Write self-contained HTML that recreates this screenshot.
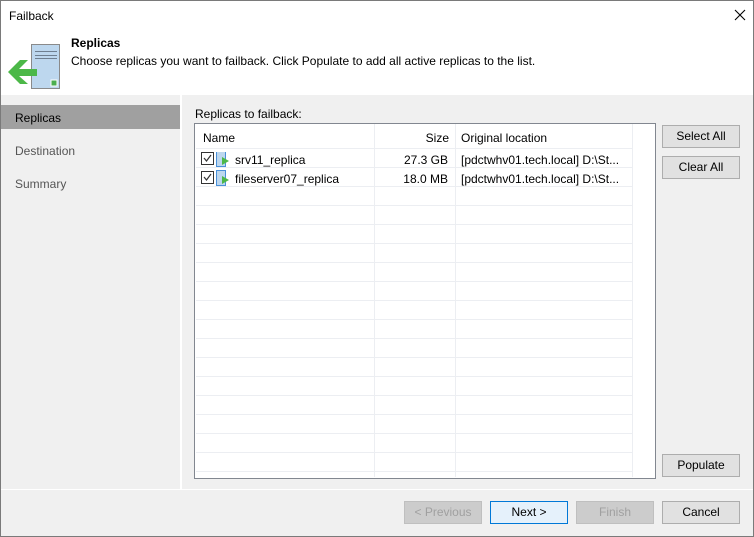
<!DOCTYPE html>
<html><head><style>
*{margin:0;padding:0;box-sizing:border-box}
body{width:754px;height:537px;position:relative;font-family:"Liberation Sans",sans-serif;font-size:12px;color:#000;background:#fff;overflow:hidden}
.win{position:absolute;left:0;top:0;width:754px;height:537px;border:1px solid #7a7a7a;background:#fff}
.a{position:absolute}
.btn{position:absolute;width:78px;height:23px;border:1px solid #adadad;background:#e1e1e1;text-align:center;line-height:21px;font-size:12px}
.dis{color:#a0a0a0;background:#cccccc;border-color:#bfbfbf}
.hl{position:absolute;left:1px;width:436px;height:1px;background:#eceef2}
.vl{position:absolute;top:0;width:1px;height:353px;background:#eceef2}
</style></head><body><div class="win">
<div class="a" style="left:8px;top:8px">Failback</div>
<svg class="a" style="left:733px;top:8px" width="12" height="12"><path d="M1 1 L11 11 M11 1 L1 11" stroke="#000" stroke-width="1.1"/></svg>
<svg class="a" style="left:5px;top:41px" width="56" height="50">
<rect x="25.5" y="2.5" width="28" height="44" fill="#bdd7ee" stroke="#8a8a8a"/>
<line x1="29" y1="9.5" x2="51" y2="9.5" stroke="#6f7f90"/><line x1="29" y1="13.5" x2="51" y2="13.5" stroke="#6f7f90"/><line x1="29" y1="16.5" x2="51" y2="16.5" stroke="#6f7f90"/>
<rect x="45" y="38" width="6" height="6" fill="#4caf50" stroke="#fff"/>
<polygon points="2,30 14,18 22,18 13,27 31,27 31,34 13,34 22,42 14,42" fill="#4cb848"/>
</svg>
<div class="a" style="left:70px;top:35px;font-weight:bold">Replicas</div>
<div class="a" style="left:70px;top:53px">Choose replicas you want to failback. Click Populate to add all active replicas to the list.</div>
<div class="a" style="left:0;top:94px;width:752px;height:394px;background:#f0f0f0"></div>
<div class="a" style="left:179px;top:94px;width:2px;height:394px;background:#fff"></div>
<div class="a" style="left:0;top:104px;width:179px;height:24px;background:#a0a0a0"></div>
<div class="a" style="left:14px;top:110px">Replicas</div>
<div class="a" style="left:14px;top:143px;color:#555">Destination</div>
<div class="a" style="left:14px;top:176px;color:#555">Summary</div>
<div class="a" style="left:194px;top:106px">Replicas to failback:</div>
<div class="a" style="left:193px;top:122px;width:462px;height:356px;border:1px solid #828790;background:#fff">
<div class="vl" style="left:179px"></div><div class="vl" style="left:260px"></div><div class="vl" style="left:437px"></div>
<div class="hl" style="top:24px;width:436px"></div>
<div class="hl" style="top:43px"></div><div class="hl" style="top:62px"></div><div class="hl" style="top:81px"></div><div class="hl" style="top:100px"></div><div class="hl" style="top:119px"></div><div class="hl" style="top:138px"></div><div class="hl" style="top:157px"></div><div class="hl" style="top:176px"></div><div class="hl" style="top:195px"></div><div class="hl" style="top:214px"></div><div class="hl" style="top:233px"></div><div class="hl" style="top:252px"></div><div class="hl" style="top:271px"></div><div class="hl" style="top:290px"></div><div class="hl" style="top:309px"></div><div class="hl" style="top:328px"></div><div class="hl" style="top:347px"></div>
<div class="a" style="left:8px;top:7px">Name</div>
<div class="a" style="left:180px;width:74px;top:7px;text-align:right">Size</div>
<div class="a" style="left:266px;top:7px">Original location</div>
<svg class="a" style="left:6px;top:28px" width="30" height="36">
<g><rect x="0.5" y="0.5" width="12" height="12" fill="#fff" stroke="#333"/><path d="M3 6 L5.5 9 L10 3" fill="none" stroke="#333" stroke-width="1.2"/></g>
<g transform="translate(0,19)"><rect x="0.5" y="0.5" width="12" height="12" fill="#fff" stroke="#333"/><path d="M3 6 L5.5 9 L10 3" fill="none" stroke="#333" stroke-width="1.2"/></g>
<g><rect x="15.5" y="-0.5" width="9" height="15" fill="#bdd7ee" stroke="#4a90d9"/><polygon points="21,5 28,9 21,13" fill="#4cb848"/></g>
<g transform="translate(0,19)"><rect x="15.5" y="-0.5" width="9" height="15" fill="#bdd7ee" stroke="#4a90d9"/><polygon points="21,5 28,9 21,13" fill="#4cb848"/></g>
</svg>
<div class="a" style="left:40px;top:29px">srv11_replica</div>
<div class="a" style="left:40px;top:48px">fileserver07_replica</div>
<div class="a" style="left:180px;width:73px;top:29px;text-align:right">27.3 GB</div>
<div class="a" style="left:180px;width:73px;top:48px;text-align:right">18.0 MB</div>
<div class="a" style="left:266px;top:29px">[pdctwhv01.tech.local] D:\St...</div>
<div class="a" style="left:266px;top:48px">[pdctwhv01.tech.local] D:\St...</div>
</div>
<div class="btn" style="left:661px;top:124px">Select All</div>
<div class="btn" style="left:661px;top:155px">Clear All</div>
<div class="btn" style="left:661px;top:453px">Populate</div>
<div class="a" style="left:0;top:488px;width:752px;height:1px;background:#fff"></div>
<div class="a" style="left:0;top:489px;width:752px;height:46px;background:#f0f0f0"></div>
<div class="btn dis" style="left:403px;top:500px">&lt; Previous</div>
<div class="btn" style="left:489px;top:500px;background:#e5f1fb;border-color:#0078d7">Next &gt;</div>
<div class="btn dis" style="left:575px;top:500px">Finish</div>
<div class="btn" style="left:661px;top:500px">Cancel</div>
</div></body></html>
